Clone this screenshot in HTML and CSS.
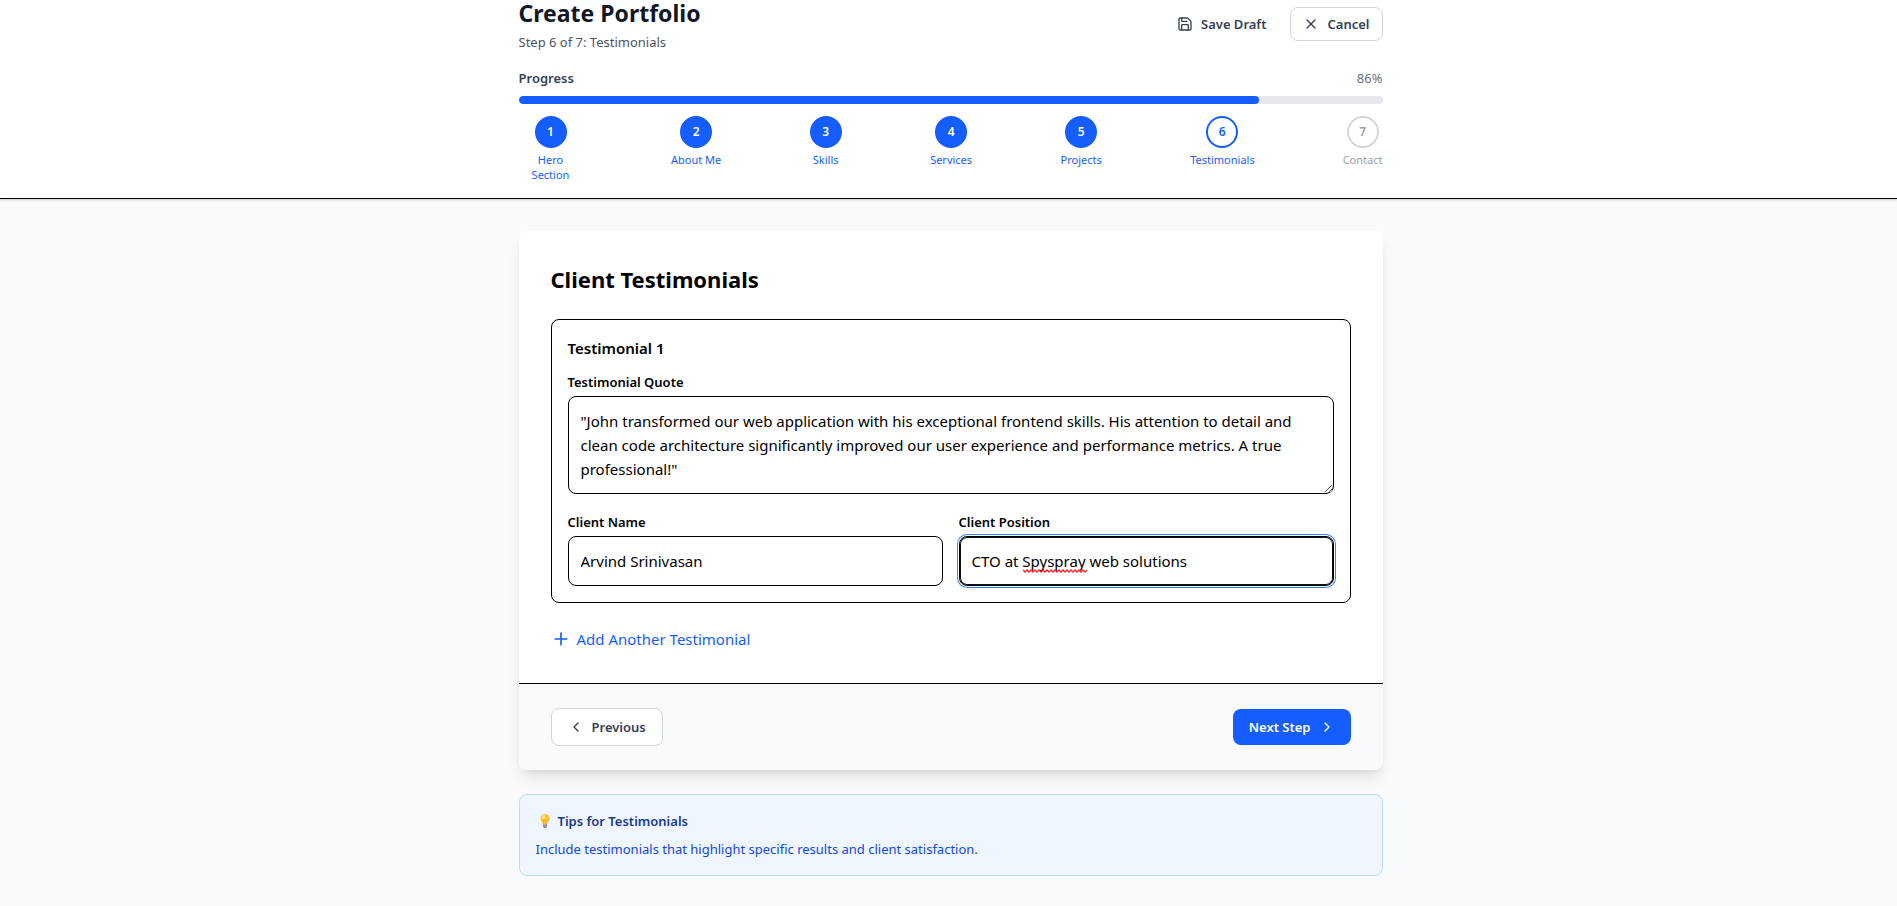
FILE: index.html
```html
<!DOCTYPE html>
<html lang="en">
<head>
<meta charset="utf-8">
<title>Create Portfolio</title>
<link rel="stylesheet" href="styles.css">
</head>
<body>
<header class="header">
  <div class="container">
    <div class="title-row">
      <div>
        <h1 class="page-title">Create Portfolio</h1>
        <p class="subtitle">Step 6 of 7: Testimonials</p>
      </div>
      <div class="actions">
        <button type="button" class="btn btn-ghost">
          <svg class="icon" viewBox="0 0 24 24" aria-hidden="true"><path d="M15.2 3a2 2 0 0 1 1.4.6l3.8 3.8a2 2 0 0 1 .6 1.4V19a2 2 0 0 1-2 2H5a2 2 0 0 1-2-2V5a2 2 0 0 1 2-2z"/><path d="M17 21v-7a1 1 0 0 0-1-1H8a1 1 0 0 0-1 1v7"/><path d="M7 3v4a1 1 0 0 0 1 1h7"/></svg>
          Save Draft
        </button>
        <button type="button" class="btn btn-cancel">
          <svg class="icon" viewBox="0 0 24 24" aria-hidden="true"><path d="M18 6 6 18"/><path d="m6 6 12 12"/></svg>
          Cancel
        </button>
      </div>
    </div>
    <div class="progress-head">
      <span class="progress-label">Progress</span>
      <span class="progress-value">86%</span>
    </div>
    <div class="progress-track"><div class="progress-fill" style="width: 85.7%"></div></div>
    <ol class="steps">
      <li class="step done"><span class="circle">1</span><span class="step-name">Hero Section</span></li>
      <li class="step done"><span class="circle">2</span><span class="step-name">About Me</span></li>
      <li class="step done"><span class="circle">3</span><span class="step-name">Skills</span></li>
      <li class="step done"><span class="circle">4</span><span class="step-name">Services</span></li>
      <li class="step done"><span class="circle">5</span><span class="step-name">Projects</span></li>
      <li class="step current"><span class="circle">6</span><span class="step-name">Testimonials</span></li>
      <li class="step"><span class="circle">7</span><span class="step-name">Contact</span></li>
    </ol>
  </div>
</header>
<main class="main">
  <div class="container">
    <form class="card">
      <div class="card-body">
        <h2 class="card-title">Client Testimonials</h2>
        <section class="entry">
          <h3 class="entry-title">Testimonial 1</h3>
          <label class="label" for="quote">Testimonial Quote</label>
          <textarea class="field" id="quote" rows="3">"John transformed our web application with his exceptional frontend skills. His attention to detail and clean code architecture significantly improved our user experience and performance metrics. A true professional!"</textarea>
          <div class="field-grid">
            <div>
              <label class="label" for="name">Client Name</label>
              <input class="field" id="name" type="text" value="Arvind Srinivasan">
            </div>
            <div>
              <label class="label" for="position">Client Position</label>
              <div class="field-wrap">
                <input class="field is-focused" id="position" type="text" value="CTO at Spyspray web solutions">
                <svg class="squiggle" viewBox="0 0 64 4" aria-hidden="true"><path d="M0 1l2 2 2-2 2 2 2-2 2 2 2-2 2 2 2-2 2 2 2-2 2 2 2-2 2 2 2-2 2 2 2-2 2 2 2-2 2 2 2-2 2 2 2-2 2 2 2-2 2 2 2-2 2 2 2-2 2 2 2-2 2 2 2-2"/></svg>
              </div>
            </div>
          </div>
        </section>
        <button type="button" class="add">
          <svg class="icon icon-lg" viewBox="0 0 24 24" aria-hidden="true"><path d="M5 12h14"/><path d="M12 5v14"/></svg>
          Add Another Testimonial
        </button>
      </div>
      <div class="card-footer">
        <button type="button" class="btn btn-prev">
          <svg class="icon" viewBox="0 0 24 24" aria-hidden="true"><path d="m15 18-6-6 6-6"/></svg>
          Previous
        </button>
        <button type="button" class="btn btn-next">
          Next Step
          <svg class="icon" viewBox="0 0 24 24" aria-hidden="true"><path d="m9 18 6-6-6-6"/></svg>
        </button>
      </div>
    </form>
    <aside class="tips">
      <h3 class="tips-title">
        <svg class="bulb" viewBox="0 0 18 18" aria-hidden="true">
          <path d="M9 2a4.600 4.600 0 0 0-4.600 4.600c0 2.700 2.200 3.200 2.600 5.900h4c.4-2.700 2.600-3.200 2.600-5.900A4.600 4.600 0 0 0 9 2z" fill="#fcc436"/>
          <ellipse cx="7.500" cy="5" rx="1.500" ry="1.900" fill="#ffe79a"/>
          <path d="M8 12.500 7.500 7.500 9 8.500l1.500-1-.5 5" fill="none" stroke="#f59f1b" stroke-width=".7"/>
          <path d="M7 12.500h4v2l-1 1.500H8l-1-1.500z" fill="#8d7b92"/>
          <path d="M7 14h4" stroke="#c9bccb" stroke-width=".6"/>
        </svg>
        Tips for Testimonials
      </h3>
      <p class="tips-text">Include testimonials that highlight specific results and client satisfaction.</p>
    </aside>
  </div>
</main>
</body>
</html>
```

FILE: styles.css
```css
*, *::before, *::after { box-sizing: border-box; }

body {
  margin: 0;
  background: #f9fafb;
  color: #000;
  font-family: "Noto Sans", "Open Sans", sans-serif;
  font-size: 15px;
  line-height: 24px;
}

h1, h2, h3, p, ol { margin: 0; padding: 0; }

button, input, textarea { font: inherit; color: inherit; }

.container {
  max-width: 896px;
  margin: 0 auto;
  padding: 0 16px;
}

.header, .main { padding-left: 4px; }

.header {
  background: #fff;
  border-bottom: 1px solid #000;
  box-shadow: 0 1px 3px rgba(0, 0, 0, 0.1), 0 1px 2px rgba(0, 0, 0, 0.1);
  padding-bottom: 16px;
}

.title-row {
  display: flex;
  justify-content: space-between;
  align-items: center;
  margin-bottom: 16px;
}

.page-title {
  font-size: 23px;
  line-height: 26px;
  font-weight: 700;
  color: #101828;
}

.subtitle {
  margin-top: 6px;
  font-size: 13px;
  line-height: 20px;
  color: #4a5565;
}

.actions { display: flex; align-items: center; gap: 12px; padding-bottom: 4px; }

.btn {
  display: inline-flex;
  align-items: center;
  gap: 8px;
  border: 1px solid transparent;
  border-radius: 8px;
  background: transparent;
  font-size: 13px;
  line-height: 20px;
  font-weight: 600;
  color: #364153;
}

.btn-ghost { border: 0; padding: 6px 12px; }
.btn-cancel { border-color: #d1d5dc; padding: 6px 12px; }
.btn-prev { border-color: #d1d5dc; background: #fff; padding: 8px 16px; }
.btn-next { border: 0; background: #155dfc; color: #fff; padding: 8px 16px; }

.icon {
  width: 16px;
  height: 16px;
  fill: none;
  stroke: currentColor;
  stroke-width: 2;
  stroke-linecap: round;
  stroke-linejoin: round;
}

.icon-lg { width: 20px; height: 20px; }

.progress-head {
  display: flex;
  justify-content: space-between;
  margin-bottom: 8px;
  font-size: 13px;
  line-height: 20px;
}

.progress-label { font-weight: 600; color: #364153; }
.progress-value { color: #6a7282; }

.progress-track {
  height: 8px;
  border-radius: 4px;
  background: #e5e7eb;
  overflow: hidden;
}

.progress-fill { height: 100%; border-radius: 4px; background: #155dfc; }

.steps {
  display: flex;
  justify-content: space-between;
  margin-top: 12px;
  list-style: none;
}

.step {
  display: flex;
  flex-direction: column;
  align-items: center;
  color: #99a1af;
}

.circle {
  display: flex;
  align-items: center;
  justify-content: center;
  width: 32px;
  height: 32px;
  border: 2px solid #d1d5dc;
  border-radius: 50%;
  background: #fff;
  font-size: 12px;
  line-height: 16px;
  font-weight: 600;
}

.step-name {
  max-width: 64px;
  margin-top: 4px;
  font-size: 11px;
  line-height: 15px;
  text-align: center;
}

.done, .current { color: #155dfc; }
.done .circle { background: #155dfc; border-color: #155dfc; color: #fff; }
.current .circle { border-color: #155dfc; }

.main { padding-top: 32px; padding-bottom: 30px; }

.card {
  border-radius: 8px;
  background: #fff;
  box-shadow: 0 10px 15px -3px rgba(0, 0, 0, 0.1), 0 4px 6px -4px rgba(0, 0, 0, 0.1);
  overflow: hidden;
}

.card-body { padding: 32px; }

.card-title {
  margin-bottom: 24px;
  font-size: 22px;
  line-height: 32px;
  font-weight: 700;
}

.entry {
  margin-bottom: 24px;
  padding: 16px;
  border: 1px solid #000;
  border-radius: 8px;
}

.entry-title {
  margin-bottom: 12px;
  font-size: 15px;
  line-height: 24px;
  font-weight: 600;
}

.label {
  display: block;
  margin-bottom: 4px;
  font-size: 13px;
  line-height: 20px;
  font-weight: 600;
}

.field {
  display: block;
  width: 100%;
  padding: 12px;
  border: 1px solid #000;
  border-radius: 8px;
  background: #fff;
  line-height: 24px;
  outline: none;
}

input.field { height: 50px; }

.is-focused {
  box-shadow: inset 0 0 0 1px #101010, 0 0 0 1px #fff, 0 0 0 2px #3b82f6;
}

.field-grid {
  display: grid;
  grid-template-columns: 1fr 1fr;
  gap: 16px;
  margin-top: 18px;
}

.field-wrap { position: relative; }

.squiggle {
  position: absolute;
  left: 64px;
  top: 33px;
  width: 64px;
  height: 4px;
  fill: none;
  stroke: #f22;
  stroke-width: 1.4;
}

.add {
  display: flex;
  align-items: center;
  gap: 6px;
  padding: 0;
  border: 0;
  background: none;
  color: #155dfc;
}

.card-footer {
  display: flex;
  justify-content: space-between;
  align-items: center;
  padding: 24px 32px;
  border-top: 1px solid #000;
  background: #f9fafb;
}

.tips {
  margin-top: 24px;
  padding: 16px;
  border: 1px solid #bedbff;
  border-radius: 8px;
  background: #eff6ff;
  font-size: 13px;
  line-height: 20px;
}

.tips-title {
  display: flex;
  align-items: center;
  gap: 4px;
  margin-bottom: 8px;
  font-size: 13px;
  font-weight: 600;
  color: #1c398e;
}

.bulb { width: 18px; height: 18px; }

.tips-text { color: #1447e6; }
```
